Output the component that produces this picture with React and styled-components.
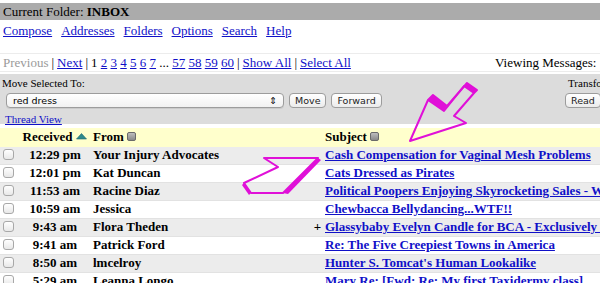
import React from "react";
import styled, { createGlobalStyle } from "styled-components";

const GlobalStyle = createGlobalStyle`
  html, body {
    margin: 0;
    padding: 0;
    background: #fff;
    overflow: hidden;
    font-family: "Liberation Serif", "Times New Roman", serif;
    font-size: 13px;
    color: #000;
  }
`;

const messages = [
  { time: "12:29 pm", from: "Your Injury Advocates", subject: "Cash Compensation for Vaginal Mesh Problems" },
  { time: "12:01 pm", from: "Kat Duncan", subject: "Cats Dressed as Pirates" },
  { time: "11:53 am", from: "Racine Diaz", subject: "Political Poopers Enjoying Skyrocketing Sales - Wow!" },
  { time: "10:59 am", from: "Jessica", subject: "Chewbacca Bellydancing...WTF!!" },
  { time: "9:43 am", from: "Flora Theden", subject: "Glassybaby Evelyn Candle for BCA - Exclusively at Nordstrom", flag: "+" },
  { time: "9:41 am", from: "Patrick Ford", subject: "Re: The Five Creepiest Towns in America" },
  { time: "8:50 am", from: "lmcelroy", subject: "Hunter S. Tomcat's Human Lookalike" },
  { time: "5:29 am", from: "Leanna Longo", subject: "Mary Re: [Fwd: Re: My first Taxidermy class]" },
];

const Page = styled.div`
  position: relative;
  width: 760px;
  padding-top: 3px;
`;

const FolderBar = styled.div`
  background: #ababab;
  height: 17px;
  line-height: 17px;
  padding-left: 3px;
`;

const NavBar = styled.div`
  display: flex;
  gap: 9px;
  padding: 2px 3px 0;
  height: 18px;
  line-height: 18px;
`;

const A = styled.a`
  color: #1010c8;
  text-decoration: underline;
  cursor: pointer;
  font-weight: ${(p) => (p.$bold ? "bold" : "normal")};
`;

const Pager = styled.div`
  display: flex;
  margin-top: 13px;
  height: 17px;
  line-height: 17px;
  border-top: 1px solid #ececec;
  border-bottom: 1px solid #ececec;
`;

const PagerLinks = styled.div`
  width: 492px;
  padding-left: 3px;
  white-space: nowrap;
`;

const Muted = styled.span`
  color: #9a9a9a;
`;

const Sep = styled.span`
  margin: 0 3px;
`;

const Toolbar = styled.div`
  display: flex;
  margin-top: 2px;
  background: #dcdcdc;
  height: 50px;
  padding: 3px 0 0;
  box-sizing: border-box;
`;

const ToolLeft = styled.div`
  width: 561px;
  padding-left: 2px;
`;

const ToolRight = styled.div`
  padding-left: 2px;
`;

const Label = styled.div`
  font-size: 11px;
  line-height: 13px;
  padding-left: ${(p) => (p.$indent ? "3px" : "0")};
  margin-bottom: 2px;
  white-space: nowrap;
`;

const Controls = styled.div`
  display: flex;
  align-items: center;
  gap: 5px;
  padding-left: ${(p) => (p.$flush ? "0" : "4px")};
  height: 16px;
`;

const Select = styled.div`
  width: 264px;
  height: 13px;
  border: 1px solid #9c9c9c;
  border-radius: 4px;
  background: linear-gradient(#ffffff, #f1f1f1);
  font-family: "DejaVu Sans", "Liberation Sans", sans-serif;
  font-size: 9.5px;
  line-height: 13px;
  padding: 0 6px;
  display: flex;
  justify-content: space-between;
  box-shadow: 0 1px 0 rgba(0, 0, 0, 0.08);
`;

const Button = styled.button`
  height: 15px;
  border: 1px solid #9c9c9c;
  border-radius: 4px;
  background: linear-gradient(#ffffff, #ececec);
  font-family: "DejaVu Sans", "Liberation Sans", sans-serif;
  font-size: 9.5px;
  line-height: 13px;
  padding: 0 5px;
  color: #222;
  white-space: nowrap;
`;

const ThreadLink = styled(A)`
  display: block;
  font-size: 11px;
  line-height: 13px;
  margin: 5px 0 0 3px;
`;

const Table = styled.table`
  margin-top: 4px;
  border-collapse: collapse;
  white-space: nowrap;
  font-weight: bold;
`;

const HeadRow = styled.tr`
  background: #ffffcc;
  height: 18px;
`;

const Row = styled.tr`
  background: ${(p) => (p.$alt ? "#ececec" : "#ffffff")};
  height: 18px;
`;

const Cell = styled.td`
  padding: 0;
  width: ${(p) => p.$w || "auto"};
  text-align: ${(p) => p.$align || "left"};
  line-height: 16px;
  border-bottom: 1px solid ${(p) => (p.$head ? "#ffffcc" : "#e2e2e2")};
`;

const Check = styled.span`
  display: inline-block;
  width: 9px;
  height: 9px;
  margin: 0 0 0 3px;
  border: 1px solid #a8a8a8;
  border-radius: 3px;
  background: linear-gradient(#ffffff, #e8e8e8);
  vertical-align: -1px;
`;

const SortBox = styled.span`
  display: inline-block;
  width: 7px;
  height: 7px;
  margin-left: 3px;
  border: 1px solid #6a6a6a;
  border-radius: 2px;
  background: linear-gradient(#bdbdbd, #8a8a8a);
  vertical-align: 0px;
`;

const UpArrow = () => (
  <svg width="11" height="7" viewBox="0 0 11 7" style={{ marginLeft: 4, verticalAlign: 1 }}>
    <path d="M5.5 0.5 L10.5 6 L0.5 6 Z" fill="#2f8a8c" stroke="#1f6a6c" strokeWidth="0.6" />
  </svg>
);

const Overlay = styled.svg`
  position: absolute;
  left: 0;
  top: 0;
  pointer-events: none;
`;

const pink = "#e010d8";

// hand-drawn annotation arrows lying over the list
const Arrows = () => (
  <Overlay width="600" height="283" viewBox="0 0 600 283">
    <g fill="none" stroke={pink} strokeWidth="2" strokeLinejoin="round">
      <path d="M410 141 L428 100 L444 111 L464 86 L474 93 L454 116 L466 123 Z" />
      <path d="M428 100 L433 95 L447 106 L467 83 L477 90 L474 93" />
      <path d="M318 158 L264 158 L278 167 L244 183 L251 193 L283 193 Z" />
    </g>
    <g fill={pink}>
      <path d="M428 100 L433 95 L447 106 L444 111 Z" />
      <path d="M464 86 L467 83 L477 90 L474 93 Z" />
      <path d="M283 193 L318 158 L321 160 L288 194 Z" />
      <path d="M244 183 L251 193 L249 195 L242 185 Z" />
    </g>
  </Overlay>
);

export default function App() {
  return (
    <Page>
      <GlobalStyle />
      <FolderBar>
        Current Folder: <b>INBOX</b>
      </FolderBar>
      <NavBar>
        {["Compose", "Addresses", "Folders", "Options", "Search", "Help"].map((l) => (
          <A key={l}>{l}</A>
        ))}
      </NavBar>
      <Pager>
        <PagerLinks>
          <Muted>Previous</Muted>
          <Sep>|</Sep>
          <A>Next</A>
          <Sep>|</Sep>1 <A>2</A> <A>3</A> <A>4</A> <A>5</A> <A>6</A> <A>7</A> ... <A>57</A>{" "}
          <A>58</A> <A>59</A> <A>60</A>
          <Sep>|</Sep>
          <A>Show All</A>
          <Sep>|</Sep>
          <A>Select All</A>
        </PagerLinks>
        <div>Viewing Messages: 1 to 15 (889 total)</div>
      </Pager>
      <Toolbar>
        <ToolLeft>
          <Label>Move Selected To:</Label>
          <Controls>
            <Select>
              <span>red dress</span>
              <span>⇕</span>
            </Select>
            <Button>Move</Button>
            <Button>Forward</Button>
          </Controls>
          <ThreadLink>Thread View</ThreadLink>
        </ToolLeft>
        <ToolRight>
          <Label $indent>Transform Selected Messages:</Label>
          <Controls $flush>
            <Button>Read</Button>
            <Button>Unread</Button>
          </Controls>
        </ToolRight>
      </Toolbar>
      <Table>
        <tbody>
          <HeadRow>
            <Cell $head $w="17px" />
            <Cell $head $w="76px" $align="center">
              Received
              <UpArrow />
            </Cell>
            <Cell $head $w="217px">
              From
              <SortBox />
            </Cell>
            <Cell $head $w="15px" />
            <Cell $head>
              Subject
              <SortBox />
            </Cell>
          </HeadRow>
          {messages.map((m, i) => (
            <Row key={i} $alt={i % 2 === 0}>
              <Cell>
                <Check />
              </Cell>
              <Cell $align="center">{m.time}</Cell>
              <Cell>{m.from}</Cell>
              <Cell $align="center">{m.flag || ""}</Cell>
              <Cell>
                <A $bold>{m.subject}</A>
              </Cell>
            </Row>
          ))}
        </tbody>
      </Table>
      <Arrows />
    </Page>
  );
}
